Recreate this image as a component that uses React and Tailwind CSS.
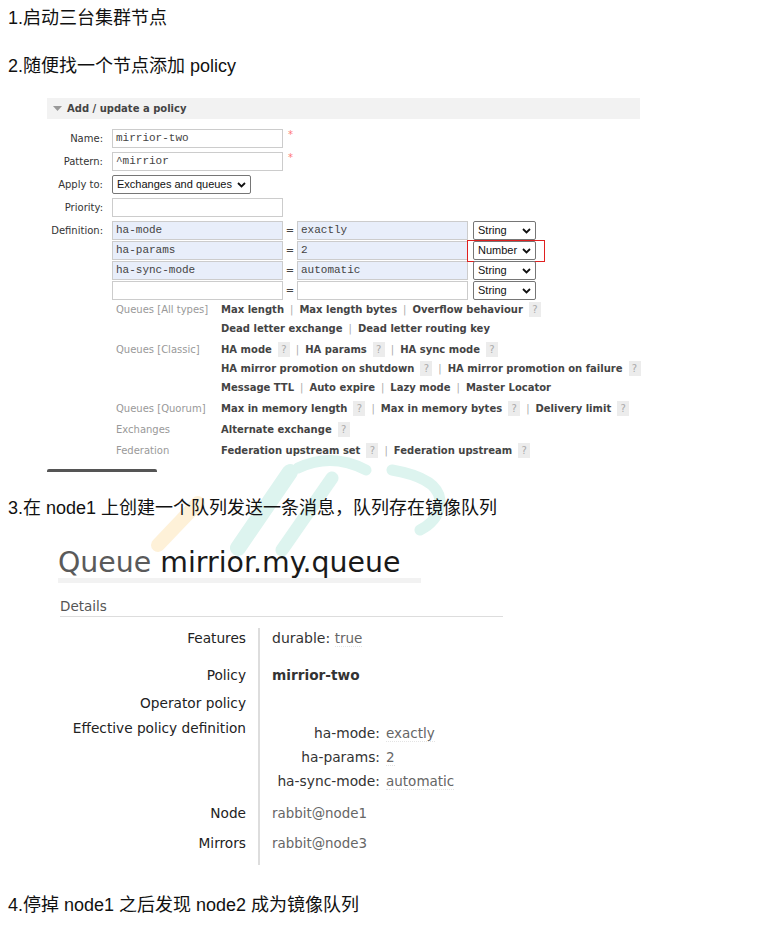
import React from "react";

const heading = "font-['Liberation_Sans','Noto_Sans_CJK_SC',sans-serif] text-[18px] text-[#111] h-[36px] flex items-center pl-[8px] whitespace-nowrap";
const verdana = "font-['DejaVu_Sans',sans-serif]";

function Chevron() {
  return (
    <svg width="9" height="6" viewBox="0 0 9 6" className="shrink-0">
      <path d="M1 1 L4.5 4.5 L8 1" stroke="#111" strokeWidth="1.8" fill="none" />
    </svg>
  );
}

function Sel({ width, children }) {
  return (
    <div
      className={`flex items-center justify-between h-[19px] border border-[#767676] rounded-[2px] bg-white pl-[4px] pr-[4px] text-[11px] text-[#111] font-['Liberation_Sans',sans-serif] ${width}`}
    >
      <span>{children}</span>
      <Chevron />
    </div>
  );
}

function Field({ value, blue }) {
  return (
    <div
      className={`h-[19px] w-[171px] border border-[#ccc] flex items-center pl-[3px] text-[11px] text-[#444] font-['Liberation_Mono',monospace] ${
        blue ? "bg-[#e8eefa]" : "bg-white"
      }`}
    >
      {value}
    </div>
  );
}

function Q() {
  return (
    <span className="inline-block w-[12px] h-[15px] leading-[15px] bg-[#ececec] text-[#aaa] text-center font-normal ml-[6px] text-[10px]">
      ?
    </span>
  );
}

function Sep() {
  return <span className="mx-[6px] font-normal text-[#aaa]">|</span>;
}

function Label({ children }) {
  return (
    <div className="w-[65px] shrink-0 text-right pr-[9px] text-[10px] text-[#333]">{children}</div>
  );
}

function DefRow({ k, v, type, marked }) {
  return (
    <div className="flex items-center h-[19px]">
      <Field value={k} blue={!!k} />
      <span className="w-[14px] text-center text-[10px] text-[#444]">=</span>
      <Field value={v} blue={!!v} />
      <div className="relative ml-[5px]">
        <Sel width="w-[63px]">{type}</Sel>
        {marked && (
          <div className="absolute -left-[6px] -top-[1px] w-[78px] h-[22px] border-[1.5px] border-[#e02020]" />
        )}
      </div>
    </div>
  );
}

function HelpLine({ children }) {
  return <div className="flex items-center h-[19px] whitespace-nowrap">{children}</div>;
}

function HelpGroup({ title, children }) {
  return (
    <div className="flex">
      <div className="w-[105px] shrink-0 h-[19px] leading-[19px] text-[#999] font-normal">{title}</div>
      <div className="font-bold text-[#444]">{children}</div>
    </div>
  );
}

function PolicyPanel() {
  return (
    <div className={`ml-[47px] w-[593px] ${verdana}`}>
      <div className="h-[21px] bg-[#f2f2f2] flex items-center pl-[6px] text-[10px] font-bold text-[#444]">
        <svg width="9" height="6" viewBox="0 0 9 6" className="mr-[5px]">
          <path d="M0 0 L9 0 L4.5 5 Z" fill="#999" />
        </svg>
        Add / update a policy
      </div>

      <div className="mt-[10px] flex flex-col gap-[4px]">
        <div className="flex items-center">
          <Label>Name:</Label>
          <Field value="mirrior-two" />
          <span className="ml-[5px] self-start text-[10px] text-[#f77] leading-[12px]">*</span>
        </div>
        <div className="flex items-center">
          <Label>Pattern:</Label>
          <Field value="^mirrior" />
          <span className="ml-[5px] self-start text-[10px] text-[#f77] leading-[12px]">*</span>
        </div>
        <div className="flex items-center">
          <Label>Apply to:</Label>
          <Sel width="w-[139px]">Exchanges and queues</Sel>
        </div>
        <div className="flex items-center">
          <Label>Priority:</Label>
          <Field value="" />
        </div>
        <div className="flex">
          <div className="h-[19px] flex items-center">
            <Label>Definition:</Label>
          </div>
          <div className="flex flex-col gap-[1px]">
            <DefRow k="ha-mode" v="exactly" type="String" />
            <DefRow k="ha-params" v="2" type="Number" marked />
            <DefRow k="ha-sync-mode" v="automatic" type="String" />
            <DefRow k="" v="" type="String" />
          </div>
        </div>
      </div>

      <div className="ml-[69px] flex flex-col gap-[2px] text-[10px]">
        <HelpGroup title="Queues [All types]">
          <HelpLine>
            Max length<Sep />Max length bytes<Sep />Overflow behaviour<Q />
          </HelpLine>
          <HelpLine>
            Dead letter exchange<Sep />Dead letter routing key
          </HelpLine>
        </HelpGroup>
        <HelpGroup title="Queues [Classic]">
          <HelpLine>
            HA mode<Q /><Sep />HA params<Q /><Sep />HA sync mode<Q />
          </HelpLine>
          <HelpLine>
            HA mirror promotion on shutdown<Q /><Sep />HA mirror promotion on failure<Q />
          </HelpLine>
          <HelpLine>
            Message TTL<Sep />Auto expire<Sep />Lazy mode<Sep />Master Locator
          </HelpLine>
        </HelpGroup>
        <HelpGroup title="Queues [Quorum]">
          <HelpLine>
            Max in memory length<Q /><Sep />Max in memory bytes<Q /><Sep />Delivery limit<Q />
          </HelpLine>
        </HelpGroup>
        <HelpGroup title="Exchanges">
          <HelpLine>
            Alternate exchange<Q />
          </HelpLine>
        </HelpGroup>
        <HelpGroup title="Federation">
          <HelpLine>
            Federation upstream set<Q /><Sep />Federation upstream<Q />
          </HelpLine>
        </HelpGroup>
      </div>

      <div className="mt-[9px] w-[110px] h-[3px] bg-[#555] rounded-t-[2px]" />
    </div>
  );
}

function Val({ children }) {
  return <span className="text-[#666] text-[13.5px] border-b border-dotted border-[#e4e4e4]">{children}</span>;
}

function Row({ label, h, children }) {
  return (
    <div className="flex" style={{ height: h }}>
      <div className="w-[188px] shrink-0 text-right text-[13.7px] text-[#222] leading-[20px] whitespace-nowrap">{label}</div>
      <div className="ml-[12px] border-l-2 border-[#ddd] pl-[12px] flex-1 leading-[20px]">{children}</div>
    </div>
  );
}

function QueuePanel() {
  return (
    <div className={`ml-[58px] w-[445px] ${verdana}`}>
      <div className="w-[363px] border-b-[5px] border-[#f2f2f2] h-[38px] leading-[35px] text-[28.4px] whitespace-nowrap">
        <span className="text-[#5a5a5a]">Queue </span>
        <span className="text-[#1a1a1a]">mirrior.my.queue</span>
      </div>
      <div className="mt-[14px] ml-[2px] leading-[18px] pb-[1px] border-b border-[#ddd] text-[13.5px] text-[#555]">
        Details
      </div>
      <div className="mt-[11px]">
        <Row label="Features" h={37}>
          <span className="text-[14px] text-[#333]">durable: </span>
          <Val>true</Val>
        </Row>
        <Row label="Policy" h={28}>
          <span className="font-bold text-[13.7px] text-[#333]">mirrior-two</span>
        </Row>
        <Row label="Operator policy" h={25} />
        <Row label="Effective policy definition" h={85}>
          <div className="pt-[3px]">
            {[
              ["ha-mode:", "exactly"],
              ["ha-params:", "2"],
              ["ha-sync-mode:", "automatic"],
            ].map(([k, v]) => (
              <div key={k} className="flex h-[24px] items-center">
                <div className="w-[108px] text-right text-[13.8px] text-[#333] whitespace-nowrap">{k}</div>
                <div className="ml-[6px]">
                  <Val>{v}</Val>
                </div>
              </div>
            ))}
          </div>
        </Row>
        <Row label="Node" h={30}>
          <span className="text-[13.4px] text-[#666]">rabbit@node1</span>
        </Row>
        <Row label="Mirrors" h={32}>
          <span className="text-[13.4px] text-[#666]">rabbit@node3</span>
        </Row>
      </div>
    </div>
  );
}

export default function App() {
  return (
    <div className="relative w-[770px] h-[936px] overflow-hidden bg-white">
      <svg
        className="absolute top-0 left-0 pointer-events-none"
        width="770"
        height="936"
        viewBox="0 0 770 936"
      >
        <g fill="none" strokeLinecap="round">
          <path d="M158 545 L198 503" stroke="#fef1d8" strokeWidth="14" />
          <path d="M238 548 L290 472" stroke="#ddf4ef" strokeWidth="16" />
          <path d="M282 550 L332 478" stroke="#ddf4ef" strokeWidth="13" />
          <path d="M298 468 Q332 452 366 470" stroke="#ddf4ef" strokeWidth="11" />
          <path d="M392 470 Q438 478 440 500 Q440 520 420 530" stroke="#ddf4ef" strokeWidth="11" />
        </g>
      </svg>

      <div className="relative">
        <div className={heading}>1.启动三台集群节点</div>
        <div className={`${heading} mt-[12px]`}>2.随便找一个节点添加 policy</div>
        <div className="mt-[14px]">
          <PolicyPanel />
        </div>
        <div className={`${heading} mt-[18px]`}>3.在 node1 上创建一个队列发送一条消息，队列存在镜像队列</div>
        <div className="mt-[19px]">
          <QueuePanel />
        </div>
        <div className={`${heading} mt-[22px]`}>4.停掉 node1 之后发现 node2 成为镜像队列</div>
      </div>
    </div>
  );
}
